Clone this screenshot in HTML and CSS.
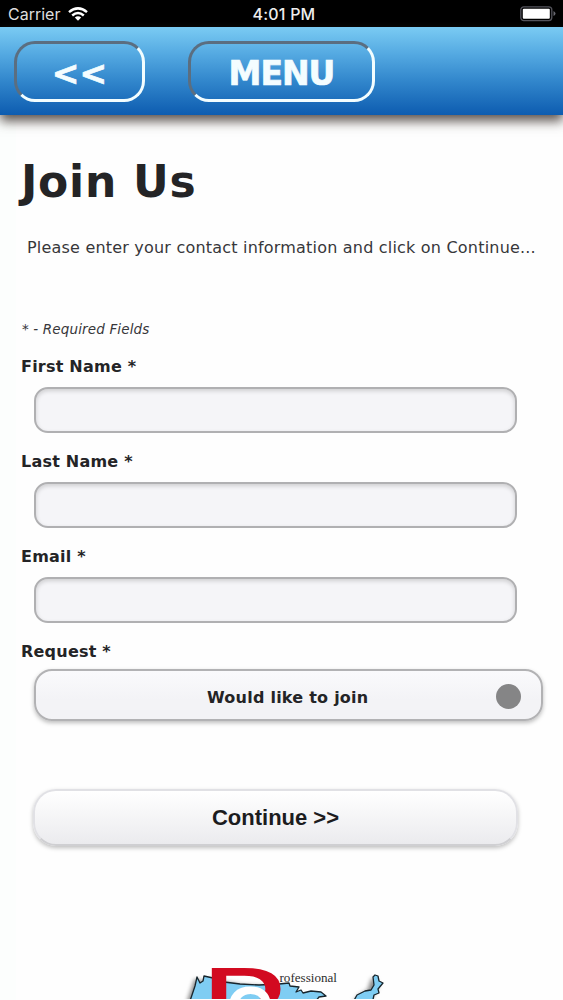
FILE: index.html
```html
<!DOCTYPE html>
<html lang="en">
<head>
<meta charset="utf-8">
<title>Join Us</title>
<link rel="stylesheet" href="styles.css">
</head>
<body>
<div class="status">
  <div class="carrier"><span>Carrier</span>
    <svg class="wifi" width="20" height="14" viewBox="0 0 20 14"><g fill="none" stroke="#fff" stroke-width="2.5"><path d="M1 5.1Q10-2.3 19 5.1"/><path d="M4.2 8.5Q10 3.6 15.8 8.5"/></g><path fill="#fff" d="M6.8 10.5Q10 7.8 13.2 10.5L10 13.8Z"/></svg>
  </div>
  <span class="clock">4:01 PM</span>
  <svg class="battery" width="36" height="16" viewBox="0 0 36 16"><rect x=".8" y=".8" width="31" height="13.8" rx="3" fill="none" stroke="#54545c" stroke-width="1.3"/><rect x="2.8" y="2.8" width="27" height="10" rx="1" fill="#fff"/><path d="M33.5 5v5q2-1 2-2.5t-2-2.5" fill="#686870"/></svg>
</div>
<header class="bar">
  <button class="nav back"><span>&lt;&lt;</span></button>
  <button class="nav menu"><span>MENU</span></button>
</header>
<main class="content">
  <h1>Join Us</h1>
  <p class="intro">Please enter your contact information and click on Continue...</p>
  <p class="note">* - Required Fields</p>
  <form>
    <label for="first">First Name *</label>
    <input id="first" type="text">
    <label for="last">Last Name *</label>
    <input id="last" type="text">
    <label for="email">Email *</label>
    <input id="email" type="text">
    <span class="label">Request *</span>
    <button type="button" class="select"><span>Would like to join</span><i class="dot"></i></button>
    <button type="button" class="submit"><span>Continue &gt;&gt;</span></button>
  </form>
  <svg class="logo" width="230" height="50" viewBox="0 0 230 50">
    <g class="land-shadow" transform="translate(-1.5 2)"><path d="M18 52L26 28l10 2 5-2 35 6 42 2 10 6 2 12Z"/><path d="M184 52l6-8 9-5 4-12 5 2 2 7-4 6-5 10Z"/></g>
    <g fill="#7fcdf3" stroke="#17252c" stroke-width="1.3" stroke-linejoin="round">
      <path d="M19 55L25 37l2-9 3 6 3-2 1-5 9 2 11 4 16 2 19 1 20-1 10-1 1 3 9 1-3 5 5-2 2 3 8-2 10 1 5 4-7 1-4 5Z"/>
      <path d="M182 55l5-9 8-4 6-1 3-5-1-8 2-2 3 1 1 5 4 2-5 6 1 4-5 2-2 9Z"/>
    </g>
    <text class="logo-p" transform="translate(27.5 89) scale(1.52 1)" x="0" y="0">P</text>
    <text class="logo-c" x="56" y="83">C</text>
    <text class="logo-word" x="109.5" y="33" textLength="57.5" lengthAdjust="spacingAndGlyphs">rofessional</text>
  </svg>
</main>
</body>
</html>
```
FILE: styles.css
```css
* { box-sizing: border-box; }
html, body { margin: 0; height: 1000px; overflow: hidden; }
body {
  background: linear-gradient(90deg, #fcfefd 16px, #fefefe 16px);
  color: #242426;
  font-family: Verdana, "DejaVu Sans", sans-serif;
}
button { margin: 0; padding: 0; color: inherit; font: inherit; display: flex; align-items: center; justify-content: center; }
.status {
  height: 27px; background: #000; color: #eee;
  display: grid; grid-template-columns: 1fr auto 1fr; align-items: center;
  padding: 1px 7px 0 8px; font: 16px/26px Inter, sans-serif;
}
.carrier { display: flex; align-items: center; gap: 8px; color: #dedede; }
.wifi { margin-top: -1px; }
.clock { font-weight: 500; letter-spacing: .2px; margin-left: 4px; }
.battery { justify-self: end; }
.bar {
  height: 88px; display: flex; align-items: flex-start; gap: 43px; padding: 14px 0 0 14px;
  background: linear-gradient(#7acbf3, #55aae2 30%, #3388cd 60%, #0d5cb0);
  box-shadow: 0 6px 11px rgba(60, 50, 46, .85);
}
.nav {
  height: 61px; border: 3px solid; border-color: #5b6e80 #f2fdff #f2fdff #5b6e80;
  border-radius: 21px; background: transparent; color: #f4fdff;
  font-size: 33px; font-weight: bold;
}
.back { width: 131px; }
.menu { width: 187px; }
.nav span { padding-top: 4px; letter-spacing: -1px; -webkit-text-stroke: .7px #f4fdff; }
.back span { font-size: 33px; letter-spacing: 0; }
.content { display: flex; flex-direction: column; padding: 39px 20px 0; }
h1 { margin: 0 0 0 1px; font-size: 44px; line-height: 56px; letter-spacing: .75px; }
.intro { margin: 26px 0 0 7px; font-size: 16px; line-height: 24px; letter-spacing: .2px; white-space: nowrap; color: #37373a; }
.note { margin: 59px 0 0 2px; font-size: 13.5px; line-height: 20px; letter-spacing: .15px; font-style: italic; color: #37373a; }
form { display: flex; flex-direction: column; padding-top: 16px; }
label, .label { align-self: flex-start; margin-left: 1px; font-size: 16px; line-height: 24px; letter-spacing: .22px; font-weight: bold; }
input {
  width: 483px; height: 46px; margin: 8px 0 17px 14px; padding: 0 14px;
  border: 2px solid #b0b0b2; border-radius: 14px; background: #f5f5f8;
  box-shadow: inset 0 2px 4px rgba(0, 0, 0, .16); font: inherit;
}
.select {
  width: 509px; height: 52px; margin: 5px 0 0 14px; padding: 2px 20px 0 171px;
  justify-content: space-between; border: 2px solid #b2b2b4;
  border-radius: 18px; background: linear-gradient(#fafafc, #f3f3f6 60%);
  box-shadow: 0 2px 4px rgba(0, 0, 0, .26);
  font-size: 16px; font-weight: bold; letter-spacing: .24px;
}
.select span { padding-top: 3px; }
.dot { width: 25px; height: 25px; border-radius: 50%; background: #858586; margin-top: 0; }
.submit {
  width: 485px; height: 57px; margin: 68px 0 0 13px;
  border: 2px solid #e1e1e5; border-bottom-color: #cfcfd2; border-radius: 23px;
  background: linear-gradient(#fff, #ebebee);
  box-shadow: 0 2px 4px rgba(0, 0, 0, .25);
  font: bold 22px "Liberation Sans", Arial, sans-serif; color: #1c1c1e;
}
.submit span { padding-top: 1px; }
.logo { margin: 103px 0 0 150px; }
.land-shadow { fill: #888; filter: blur(2px); }
.logo-p { font: 96px "DejaVu Sans", sans-serif; fill: #d20a20; }
.logo-c { font: bold 64px "Liberation Sans", Arial, sans-serif; fill: #fff; }
.logo-word { font: 13px "Liberation Serif", "Times New Roman", serif; fill: #2d2d2d; }
```
